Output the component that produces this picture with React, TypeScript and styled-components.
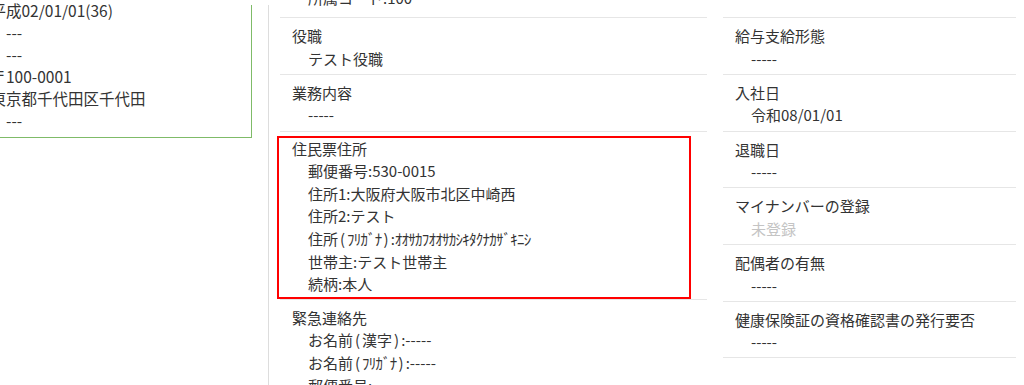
import React from 'react'
import styled, { createGlobalStyle } from 'styled-components'

const GlobalStyle = createGlobalStyle`
html, body {
  margin: 0;
  padding: 0;
  background: #fff;
}
body {
  font-family: "Noto Sans CJK JP", "Noto Sans", sans-serif;
  font-size: 15px;
  color: #333;
}
`;

const Page = styled.div`
display: flex;
align-items: stretch;
height: 385px;
padding-top: 5px;
box-sizing: border-box;
overflow: hidden;
`;

const LeftCol = styled.div`
flex: 0 0 252px;
margin-right: 16px;
align-self: flex-start;
`;

const ProfileCard = styled.div`
display: flex;
flex-direction: column;
border-right: 1px solid #7fbb68;
border-bottom: 1px solid #7fbb68;
padding-bottom: 6px;
font-size: 15.5px;
`;

const CardList = styled.div`
display: flex;
flex-direction: column;
margin-top: -6px;
`;

const CardLine = styled.div<{ $dash?: boolean }>`
line-height: 22px;
white-space: nowrap;
margin-left: ${(p) => (p.$dash ? '6px' : '-9.5px')};
`;

const MiddleCol = styled.div`
flex: 0 0 439px;
box-sizing: border-box;
border-left: 1px solid #ddd;
padding-left: 11px;
margin-right: 16px;
`;

const RightCol = styled.div`
flex: 0 0 293px;
`;

const FieldList = styled.div<{ $shift: number }>`
display: flex;
flex-direction: column;
margin-top: ${(p) => p.$shift}px;
`;

const FieldRow = styled.div<{ $boxed?: boolean; $tail?: number }>`
border-bottom: 1px solid #e6e6e6;
padding: ${(p) => (p.$boxed ? '4px 0 0 0' : `7px 0 ${3.5 + (p.$tail ?? 0)}px 12px`)};
`;

const AnnotBox = styled.div`
border: 2px solid #f00;
margin-left: -3px;
width: 414px;
box-sizing: border-box;
padding: 0 0 1px 13px;
`;

const Label = styled.div`
line-height: 22.6px;
white-space: nowrap;
`;

const Value = styled.div<{ $muted?: boolean }>`
line-height: 22.6px;
padding-left: 16px;
white-space: nowrap;
color: ${(p) => (p.$muted ? '#c4c4c4' : '#333')};
`;

const Kana = styled.span`
letter-spacing: -0.75px;
`;

const Paren = styled.span`
margin: 0 2px;
`;

type Field = {
  label: string;
  values: React.ReactNode[];
  muted?: boolean;
  boxed?: boolean;
  tail?: number;
};

const middleFields: Field[] = [
  { label: '所属', values: ['所属コード:100'], tail: 4 },
  { label: '役職', values: ['テスト役職'] },
  { label: '業務内容', values: ['-----'] },
  {
    label: '住民票住所',
    boxed: true,
    values: [
      '郵便番号:530-0015',
      '住所1:大阪府大阪市北区中崎西',
      '住所2:テスト',
      <>住所<Paren>(</Paren><Kana>ﾌﾘｶﾞﾅ</Kana><Paren>)</Paren>:<Kana>ｵｵｻｶﾌｵｵｻｶｼｷﾀｸﾅｶｻﾞｷﾆｼ</Kana></>,
      '世帯主:テスト世帯主',
      '続柄:本人',
    ],
  },
  {
    label: '緊急連絡先',
    values: [
      <>お名前<Paren>(</Paren>漢字<Paren>)</Paren>:-----</>,
      <>お名前<Paren>(</Paren><Kana>ﾌﾘｶﾞﾅ</Kana><Paren>)</Paren>:-----</>,
      '郵便番号:-----',
      '住所:-----',
    ],
  },
];

const rightFields: Field[] = [
  { label: '雇用形態', values: ['\u00a0'] },
  { label: '給与支給形態', values: ['-----'] },
  { label: '入社日', values: ['令和08/01/01'] },
  { label: '退職日', values: ['-----'] },
  { label: 'マイナンバーの登録', values: ['未登録'], muted: true },
  { label: '配偶者の有無', values: ['-----'] },
  { label: '健康保険証の資格確認書の発行要否', values: ['-----'] },
];

const profileLines = [
  '平成02/01/01(36)',
  '---',
  '---',
  '〒100-0001',
  '東京都千代田区千代田',
  '---',
];

const FieldBody = ({ f }: { f: Field }) => (
  <>
    <Label>{f.label}</Label>
    {f.values.map((v, i) => (
      <Value key={i} $muted={f.muted}>{v}</Value>
    ))}
  </>
);

const FieldItem = ({ f }: { f: Field }) =>
  f.boxed ? (
    <FieldRow $boxed>
      <AnnotBox>
        <FieldBody f={f} />
      </AnnotBox>
    </FieldRow>
  ) : (
    <FieldRow $tail={f.tail}>
      <FieldBody f={f} />
    </FieldRow>
  );

const App = () => {
  return (
    <>
      <GlobalStyle />
      <Page>
        <LeftCol>
          <ProfileCard>
            <CardList>
              {profileLines.map((l, i) => (
                <CardLine key={i} $dash={l === '---'}>{l}</CardLine>
              ))}
            </CardList>
          </ProfileCard>
        </LeftCol>
        <MiddleCol>
          <FieldList $shift={-47.5}>
            {middleFields.map((f) => (
              <FieldItem key={f.label} f={f} />
            ))}
          </FieldList>
        </MiddleCol>
        <RightCol>
          <FieldList $shift={-43.5}>
            {rightFields.map((f) => (
              <FieldItem key={f.label} f={f} />
            ))}
          </FieldList>
        </RightCol>
      </Page>
    </>
  )
}

export default App
